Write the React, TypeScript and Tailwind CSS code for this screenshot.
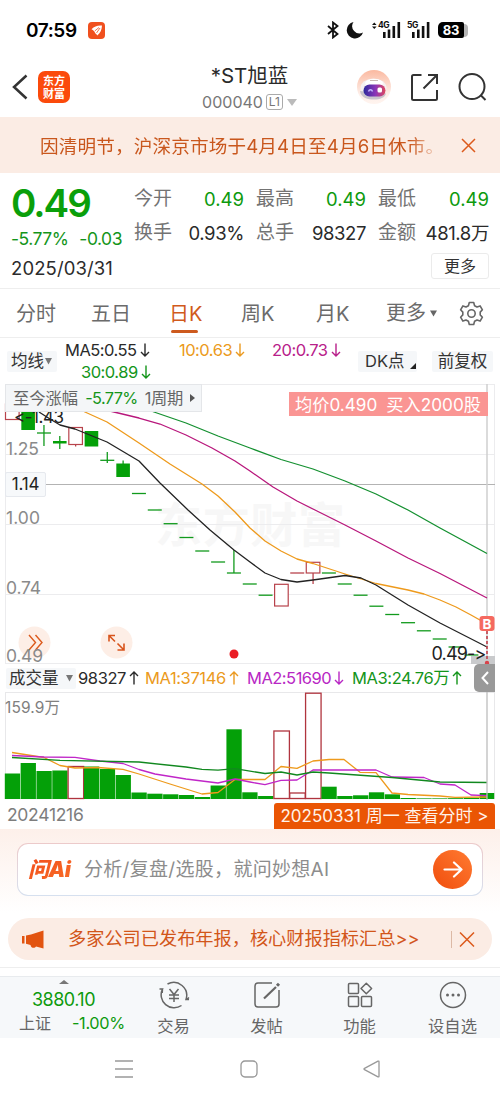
import React from 'react';

type Point = [number, number];

interface Candle {
  top: number;
  bottom: number;
  up?: boolean;
  wick?: Point;
}

// distance between two trading days on the x axis
const STEP = 15.83;
const centerX = (index: number) => 12.3 + index * STEP;

const toPoints = (points: Point[]) => points.map((p) => p.join(',')).join(' ');

const candles: Candle[] = [
  { top: 404, bottom: 419.5, up: true },
  { top: 408, bottom: 430 },
  { top: 433, bottom: 433, wick: [425, 446] },
  { top: 441, bottom: 443.5, wick: [436, 449] },
  { top: 427.5, bottom: 444.5, up: true, wick: [444.5, 446.5] },
  { top: 431, bottom: 446.5 },
  { top: 460.3, bottom: 460.3, wick: [452, 463] },
  { top: 463.5, bottom: 477, wick: [460.5, 464] },
  { top: 493.5, bottom: 493.5 },
  { top: 510, bottom: 510 },
  { top: 523.7, bottom: 523.7 },
  { top: 537.5, bottom: 537.5 },
  { top: 551, bottom: 551 },
  { top: 562, bottom: 562 },
  { top: 573, bottom: 573, wick: [550, 573] },
  { top: 584, bottom: 584 },
  { top: 595.2, bottom: 595.2 },
  { top: 584.3, bottom: 606, up: true },
  { top: 573, bottom: 573, up: true },
  { top: 562.3, bottom: 573, up: true, wick: [573, 584] },
  { top: 573, bottom: 573 },
  { top: 584, bottom: 584 },
  { top: 595.2, bottom: 595.2 },
  { top: 606.2, bottom: 606.2 },
  { top: 614.5, bottom: 614.5 },
  { top: 622.7, bottom: 622.7 },
  { top: 630.8, bottom: 630.8 },
  { top: 639, bottom: 639 },
  { top: 647, bottom: 647 },
  { top: 655, bottom: 655 },
];

const priceLines: { color: string; points: Point[] }[] = [
  {
    color: '#149030',
    points: [[140, 407], [154, 412], [186, 423], [218, 436], [250, 448], [281, 459.5], [313, 469], [345, 481], [376, 494], [408, 510], [440, 528], [464, 541], [487, 553.5]],
  },
  {
    color: '#b8177c',
    points: [[98, 408], [114, 412], [139, 418], [160, 424], [186, 435], [212, 448], [235, 461], [250, 471], [273, 487], [297, 501], [315, 510], [345, 525], [376, 541], [408, 558], [440, 573.5], [464, 586], [487, 598]],
  },
  {
    color: '#ee9a1c',
    points: [[75, 407], [85, 412], [107, 422], [139, 443], [170, 464], [202, 484], [218, 496], [235, 512], [250, 528], [265, 541], [281, 551], [297, 559], [313, 563.5], [345, 574], [376, 583.5], [408, 590], [424, 594], [440, 600], [456, 607], [471, 615], [487, 624]],
  },
  {
    color: '#222222',
    points: [[39, 412], [50, 419], [60, 425], [75, 429], [107, 442], [139, 461], [160, 483], [188, 510], [210, 530], [234, 550], [250, 562], [265, 573], [281, 579.5], [297, 582], [313, 580], [345, 575.5], [361, 578], [376, 585], [392, 595], [408, 605], [440, 623], [487, 647]],
  },
];

const volumes: { top: number; up?: boolean }[] = [
  { top: 773.5 }, { top: 763 }, { top: 771 }, { top: 770.5 }, { top: 766.5, up: true },
  { top: 766.5 }, { top: 769 }, { top: 775 }, { top: 792.5 }, { top: 793.7 },
  { top: 794.3 }, { top: 795 }, { top: 797 }, { top: 785.5 }, { top: 729.3 },
  { top: 792.3 }, { top: 796 }, { top: 731, up: true }, { top: 793, up: true }, { top: 693.2, up: true },
  { top: 786.7 }, { top: 796 }, { top: 795.3 }, { top: 792.3 }, { top: 794.3 },
  { top: 798 }, { top: 798.4 }, { top: 798.4 }, { top: 798.2 }, { top: 797.8 }, { top: 793 },
];

const volumeLines: { color: string; points: Point[] }[] = [
  {
    color: '#ee9a1c',
    points: [[12, 752.5], [44, 757.5], [60, 765.5], [75, 768], [98, 767.5], [123, 769.3], [139, 774], [170, 784], [202, 794], [218, 792.5], [235, 779.5], [265, 779.5], [281, 766.5], [297, 768.3], [313, 761], [329, 759.5], [344, 759.5], [360, 772.3], [376, 772.7], [392, 793], [408, 794.5], [440, 796], [455, 797.3], [487, 797]],
  },
  {
    color: '#c026c8',
    points: [[12, 755.5], [44, 757], [75, 757.3], [100, 761], [123, 763.5], [139, 769.5], [155, 774], [186, 779], [218, 783], [235, 779], [250, 782], [265, 784.7], [281, 780.3], [297, 780], [313, 770], [376, 770], [392, 777], [424, 777.5], [440, 784], [455, 785], [471, 795], [487, 795.7]],
  },
  {
    color: '#11881f',
    points: [[12, 757.5], [60, 760.3], [139, 762], [186, 767], [202, 769.3], [218, 770.2], [235, 768.7], [265, 773.5], [281, 772], [297, 775], [313, 772], [329, 773], [392, 777.5], [440, 782], [487, 782.5]],
  },
];

const StatusBar = () => (
  <div className="flex h-[60px] items-center justify-between pr-[32px] pl-[26px]">
    <div className="flex items-center gap-[11px]">
      <span className="text-[19px] leading-none font-semibold tracking-[-0.4px] text-black">07:59</span>
      <svg width="17" height="17" viewBox="0 0 17 17">
        <rect width="17" height="17" rx="4" fill="#f0501e" />
        <path d="M3.5 7.2C6.5 4.3 9.5 3.2 14 3.6c-.2 4.5-1.6 7.400-4.800 10-.500-1.300-1-1.900-2-2.400-.5-1.700-1.700-3.200-3.700-4Z" fill="#fff" />
        <path d="M6.800 8.900 11 5.500M8.500 11l3.500-5" stroke="#f0501e" strokeWidth=".8" />
      </svg>
    </div>
    <div className="flex items-center">
      <svg width="12" height="18" viewBox="0 0 12 18" fill="none" stroke="#111" strokeWidth="1.8">
        <path d="M1 5l9.500 8L6 16.500v-15L10.500 5 1 13" />
      </svg>
      <svg className="ml-[7px]" width="18" height="18" viewBox="0 0 18 18">
        <path d="M7.500 1A8.300 8.300 0 1 0 17 11.500 7.300 7.300 0 0 1 7.500 1Z" fill="#111" />
      </svg>
      <div className="relative ml-[8px] h-[18px] w-[29px]">
        <svg width="29" height="18" viewBox="0 0 29 18" fill="#111">
          <path d="M0 4 2.300 1.500 4.600 4ZM0 5.500h4.600L2.300 8Z" />
          <rect x="11" y="11" width="2.600" height="6" />
          <rect x="15.700" y="8.500" width="2.600" height="8.500" />
          <rect x="20.500" y="5" width="2.600" height="12" />
          <rect x="25.500" y="1" width="2.600" height="16" />
        </svg>
        <span className="absolute top-0 left-[6px] text-[8.500px] leading-[9px] font-bold tracking-[-0.5px] text-[#111]">4G</span>
      </div>
      <div className="relative ml-[6px] h-[18px] w-[24px]">
        <svg width="24" height="18" viewBox="0 0 24 18" fill="#111">
          <rect x="5" y="11" width="2.600" height="6" />
          <rect x="10" y="8.500" width="2.600" height="8.500" />
          <rect x="14.800" y="5" width="2.600" height="12" />
          <rect x="19.800" y="1" width="2.600" height="16" />
        </svg>
        <span className="absolute top-0 left-0 text-[8.500px] leading-[9px] font-bold tracking-[-0.5px] text-[#111]">5G</span>
      </div>
      <div className="ml-[7px] flex h-[16px] w-[26px] items-center justify-center rounded-l-[5px] rounded-r-[2px] bg-black text-[13px] leading-none font-bold tracking-[-0.3px] text-white">
        83
      </div>
      <div className="h-[13px] w-[4px] rounded-r-full bg-[#b5b5b5]" />
    </div>
  </div>
);

const Header = () => (
  <div className="flex h-[57px] items-start justify-between pr-[13px] pl-[12px]">
    <div className="flex w-[170px] items-center pt-[11px]">
      <svg width="16" height="26" viewBox="0 0 16 26" fill="none" stroke="#333" strokeWidth="2.500">
        <path d="M14.500 1.500 2 13l12.500 11.500" />
      </svg>
      <div className="ml-[10px] flex h-[32px] w-[32px] flex-col items-center justify-center rounded-[7px] bg-[#fb4a0b] font-['Noto_Sans_CJK_SC'] text-[11px] leading-[13px] font-bold text-white">
        <span>东方</span>
        <span>财富</span>
      </div>
    </div>
    <div className="flex flex-col items-center">
      <div className="mt-[4px] h-[24px] text-[20.500px] leading-[24px] whitespace-nowrap text-[#2a2a2a]">*ST旭蓝</div>
      <div className="mt-[6px] flex h-[16px] items-center text-[16px] leading-[16px] text-[#777]">
        <span>000040</span>
        <span className="ml-[3px] flex h-[16px] w-[17px] items-center justify-center rounded-[3px] border border-[#aaa] text-[12px]">L1</span>
        <svg className="ml-[4px]" width="10" height="7" viewBox="0 0 10 7">
          <path d="M0 0h10L5 7Z" fill="#bbb" />
        </svg>
      </div>
    </div>
    <div className="flex w-[170px] items-center justify-end pt-[9px]">
      <svg width="36" height="36" viewBox="0 0 36 36">
        <defs>
          <linearGradient id="halo" x1="0" y1="0" x2="0" y2="1">
            <stop offset="0" stopColor="#fbb9a0" />
            <stop offset=".7" stopColor="#fdeee8" />
            <stop offset="1" stopColor="#fff4ef" />
          </linearGradient>
          <linearGradient id="visor" x1="0" y1="0" x2="1" y2="0">
            <stop offset="0" stopColor="#2d2a9c" />
            <stop offset=".55" stopColor="#8b35b8" />
            <stop offset="1" stopColor="#e0485c" />
          </linearGradient>
        </defs>
        <circle cx="18" cy="18" r="17" fill="url(#halo)" />
        <ellipse cx="17.500" cy="19" rx="13" ry="9.500" fill="#f5f1f2" />
        <path d="M4 22c1 7 8 8.500 14 8.500s11-2 12-6" fill="#c9c4cc" />
        <ellipse cx="18" cy="14" rx="9" ry="4" fill="#fff" />
        <path d="M14 11.500h8" stroke="#c9b9b5" />
        <rect x="7.500" y="15.500" width="22" height="12" rx="6" fill="url(#visor)" />
        <path d="M12.500 22.500c.8-2.500 3.200-2.500 4 0" fill="none" stroke="#c5b8ff" strokeWidth="1.500" />
        <rect x="21.500" y="18.500" width="4.500" height="5" rx="1.500" fill="#fff" />
      </svg>
      <svg className="ml-[18px]" width="29" height="29" viewBox="0 0 29 29" fill="none" stroke="#333" strokeWidth="2">
        <path d="M11.500 2H3.500A1.500 1.500 0 0 0 2 3.500v22A1.500 1.500 0 0 0 3.500 27h22a1.500 1.500 0 0 0 1.500-1.500V17" />
        <path d="M18 2h9v9M27 2 13.500 15.500" />
      </svg>
      <svg className="ml-[18px]" width="30" height="30" viewBox="0 0 30 30" fill="none" stroke="#333" strokeWidth="2">
        <circle cx="15" cy="14.500" r="12.500" />
        <path d="m23.500 23 5 5" />
      </svg>
    </div>
  </div>
);

const Notice = () => (
  <div className="flex h-[56px] items-center bg-[#fbece4] pl-[40px] text-[#c9571d]">
    <div className="w-[402px] overflow-hidden pt-[3px] text-[18.600px] tracking-[0.15px] whitespace-nowrap [mask-image:linear-gradient(to_right,black_92%,transparent)]">
      因清明节，沪深京市场于4月4日至4月6日休市。
    </div>
    <svg className="ml-[19px]" width="15" height="15" viewBox="0 0 15 15" stroke="#dc5a1c" strokeWidth="1.500">
      <path d="m1 1 13 13M14 1 1 14" />
    </svg>
  </div>
);

interface QuoteCellProps {
  label: string;
  value: string;
  green?: boolean;
}

const QuoteCell: React.FC<QuoteCellProps> = ({ label, value, green }) => (
  <div className="flex items-center justify-between leading-[24px] whitespace-nowrap">
    <span className="pt-px text-[19px] text-[#737373]">{label}</span>
    <span className={`text-[18.500px] ${green ? 'tracking-normal text-[#0d9a0d]' : 'tracking-[-0.4px] text-[#2a2a2a]'}`}>{value}</span>
  </div>
);

const Quote = () => (
  <div className="flex h-[116px] border-b border-[#eee] pl-[11px]">
    <div className="w-[123px] whitespace-nowrap">
      <div className="mt-[12px] text-[38.500px] leading-[36px] font-semibold tracking-[-2px] text-[#0a9f0a]">0.49</div>
      <div className="mt-[8px] flex gap-[11px] text-[17.500px] leading-[20px] tracking-[-0.5px] text-[#14951a]">
        <span>-5.77%</span>
        <span>-0.03</span>
      </div>
      <div className="mt-[9px] text-[18.500px] leading-[20px] tracking-[0.1px] text-[#2c2c2c]">2025/03/31</div>
    </div>
    <div className="flex flex-col">
      <div className="mt-[13px] grid grid-cols-[110px_110px_111px] gap-x-[12px] gap-y-[9px]">
        <QuoteCell label="今开" value="0.49" green />
        <QuoteCell label="最高" value="0.49" green />
        <QuoteCell label="最低" value="0.49" green />
        <QuoteCell label="换手" value="0.93%" />
        <QuoteCell label="总手" value="98327" />
        <QuoteCell label="金额" value="481.8万" />
      </div>
      <button className="mt-[8px] flex h-[26px] w-[58px] items-center justify-center self-end rounded-[3px] border border-[#ebebeb] text-[16px] text-[#333]">
        更多
      </button>
    </div>
  </div>
);

const Tabs = () => (
  <div className="flex h-[49px] border-b border-[#eee] pl-[16px] text-[20px] leading-[51px] whitespace-nowrap text-[#6b6b6b]">
    <span className="w-[75px]">分时</span>
    <span className="w-[78px]">五日</span>
    <span className="relative w-[72px] text-[#d15a1c]">
      日K
      <span className="absolute bottom-[4px] left-[2px] h-[3px] w-[27px] rounded-full bg-[#cd5a1e]" />
    </span>
    <span className="w-[75px]">周K</span>
    <span className="w-[70px]">月K</span>
    <span className="flex items-center">
      更多
      <svg className="ml-[4px]" width="7" height="7" viewBox="0 0 8 7">
        <path d="M0 0h8L4 7Z" fill="#666" />
      </svg>
    </span>
    <svg className="mt-[12px] ml-[22px]" width="25" height="25" viewBox="0 0 25 25" fill="none" stroke="#666" strokeWidth="1.600">
      <path d="M10.300 1.500h4.400l.9 3.200 2.400 1.300 3.100-1.100 2.300 3.900-2.200 2.300v2.800l2.200 2.300-2.300 3.900-3.100-1.100-2.400 1.300-.9 3.200h-4.400l-.9-3.200L7 19l-3.100 1.100-2.300-3.900 2.200-2.300v-2.800L1.600 8.800l2.300-3.900L7 6l2.400-1.300Z" strokeLinejoin="round" />
      <circle cx="12.500" cy="12.500" r="3.700" />
    </svg>
  </div>
);

const MaBar = () => (
  <div className="flex h-[46px] items-center pl-[7px] whitespace-nowrap">
    <div className="flex h-[21px] w-[50px] items-center rounded-[2px] bg-[#f5f7f9] pl-[4px] text-[16.500px] text-[#333]">
      均线
      <svg className="ml-[1px]" width="7" height="7" viewBox="0 0 7 7">
        <path d="M0 0h7L3.500 6.500Z" fill="#777" />
      </svg>
    </div>
    <div className="ml-[8px] flex h-[44px] w-[291px] flex-col text-[16.500px] leading-[22px] tracking-[-0.5px]">
      <div className="flex">
        <span className="w-[114px] text-[#2a2a2a]">MA5:0.55<Arrow down /></span>
        <span className="w-[93px] text-[#eb9a20]">10:0.63<Arrow down /></span>
        <span className="text-[#b8208a]">20:0.73<Arrow down /></span>
      </div>
      <div className="pl-[16px] text-[#14951a]">30:0.89<Arrow down /></div>
    </div>
    <div className="ml-[2px] flex h-[21px] w-[59px] items-center rounded-[2px] bg-[#f5f7f9] pl-[7px] text-[16.500px] text-[#333]">
      DK点
      <svg className="mt-[9px] ml-[5px]" width="6" height="6" viewBox="0 0 6 6">
        <path d="M6 0v6H0Z" fill="#222" />
      </svg>
    </div>
    <div className="ml-[15px] flex h-[21px] w-[61px] items-center justify-center rounded-[2px] bg-[#f5f7f9] text-[16.500px] text-[#333]">
      前复权
    </div>
  </div>
);

const Arrow = ({ down }: { down?: boolean }) => (
  <svg className="ml-[3px] inline-block align-[-1px]" width="10" height="14" viewBox="0 0 10 14" fill="none" stroke="currentColor" strokeWidth="1.400">
    <path d={down ? 'M5 .5v12.500M1 9l4 4 4-4' : 'M5 13.500V1M1 5l4-4 4 4'} />
  </svg>
);

const PriceChart = () => (
  <div className="relative h-[280px]">
    <svg className="block" width="500" height="280" viewBox="0 384 500 280" fontFamily="Inter, 'Noto Sans CJK SC', sans-serif">
      <text x="155" y="542" fontSize="47" fontWeight="700" fill="#f7f7f7" textLength="190">东方财富</text>
      <path d="M5 384.500h490M5 454.500h490M5 524.500h490M5 594.500h490M5 663.500h490M5.500 384v280M494.500 384v280" stroke="#ececee" fill="none" />
      <path d="M45 484.500h450" stroke="#b3b3b3" />
      <path d="M487 384v280" stroke="#cfcfcf" strokeWidth="1.500" />
      <circle cx="34.500" cy="642.500" r="16" fill="#fdeee6" />
      <circle cx="116.500" cy="642.500" r="16" fill="#fdeee6" />
      <path d="m29 635 6.500 7.500-6.500 7.500M35.500 635l6.500 7.500-6.500 7.500" fill="none" stroke="#dc5a1c" strokeWidth="1.400" />
      <path d="m109 635.500 6 6M109 641.500v-6h6M124 650l-6.500-6.500M124 643.500v6.500h-6.500" fill="none" stroke="#d8541c" strokeWidth="1.600" />
      <g fontSize="17.500" fill="#8a8a8a">
        <text x="6" y="454.500" textLength="33">1.25</text>
        <text x="6" y="524" textLength="34">1.00</text>
        <text x="6" y="594" textLength="35">0.74</text>
        <text x="6" y="662" textLength="37">0.49</text>
      </g>
      {candles.map((c, i) => {
        const x = centerX(i);
        const color = c.up ? '#b8434c' : '#119a1c';
        return (
          <g key={i}>
            {c.wick && <path d={`M${x} ${c.wick[0]}V${c.wick[1]}`} stroke={color} strokeWidth="1.300" />}
            {c.top === c.bottom ? (
              <path d={`M${x - 7} ${c.top}h14`} stroke={color} strokeWidth="1.300" />
            ) : (
              <rect
                x={x - 6.8}
                y={c.top}
                width="13.600"
                height={c.bottom - c.top}
                fill={c.up ? '#fff' : '#04a008'}
                stroke={c.up ? color : 'none'}
                strokeWidth="1.200"
              />
            )}
          </g>
        );
      })}
      {priceLines.map((line) => (
        <polyline key={line.color} points={toPoints(line.points)} fill="none" stroke={line.color} strokeWidth="1.300" strokeLinejoin="round" />
      ))}
      <text x="14" y="422.500" fontSize="17" fill="#222" textLength="50">&lt;-1.43</text>
      <circle cx="234" cy="654" r="4.500" fill="#ea1c24" />
      <rect x="471" y="656" width="24" height="8" fill="#c9cacc" />
      <text x="431.500" y="660" fontSize="18" fill="#222" textLength="55">0.49-&gt;</text>
      <path d="M487 631v33" stroke="#c0404a" strokeWidth="1.600" strokeDasharray="3 2" />
      <circle cx="487" cy="663" r="2.200" fill="#d8434a" />
      <rect x="479.500" y="616" width="15" height="15" rx="3" fill="#f5695f" />
      <text x="487" y="628.500" fontSize="13.500" fontWeight="700" fill="#fff" textAnchor="middle">B</text>
    </svg>
    <div className="absolute top-0 left-[5px] flex h-[28px] w-[197px] items-center border border-[#e4e6e9] bg-[#f4f6f8] pl-[7px] text-[16.300px] whitespace-nowrap text-[#666]">
      至今涨幅
      <span className="ml-[7px] tracking-[-0.6px] text-[#14951a]">-5.77%</span>
      <span className="ml-[7px] tracking-[-0.3px]">1周期</span>
      <svg className="ml-[7px]" width="5" height="8" viewBox="0 0 5 8">
        <path d="M0 0v8l5-4Z" fill="#555" />
      </svg>
    </div>
    <div className="absolute top-[8px] left-[289px] flex h-[24px] w-[199px] items-center bg-[#fa9593] pt-px pl-[6px] text-[17.200px] whitespace-nowrap text-white">
      均价0.490
      <span className="ml-[9px]">买入2000股</span>
    </div>
    <div className="absolute top-[88px] left-[5px] flex h-[25px] w-[41px] items-center justify-center rounded-[2px] border border-[#e6e9ee] bg-[#f7f9fb] text-[17px] tracking-[-0.2px] text-[#222]">
      1.14
    </div>
  </div>
);

const VolumeBar = () => (
  <div className="flex h-[28px] items-center pl-[6px] text-[16.500px] tracking-[-0.4px] whitespace-nowrap">
    <div className="flex h-[21px] w-[70px] items-center rounded-[2px] bg-[#f5f7f9] pl-[3px] tracking-normal text-[#333]">
      成交量
      <svg className="ml-[7px]" width="7" height="7" viewBox="0 0 7 7">
        <path d="M0 0h7L3.500 6.500Z" fill="#777" />
      </svg>
    </div>
    <span className="ml-[2px] w-[67px] text-[#2a2a2a]">98327<Arrow /></span>
    <span className="w-[102px] tracking-[-0.4px] text-[#eb9a20]">MA1:37146<Arrow /></span>
    <span className="w-[105px] tracking-[-0.5px] text-[#b827c4]">MA2:51690<Arrow down /></span>
    <span className="w-[122px] text-[#14951a]">MA3:24.76万<Arrow /></span>
    <div className="flex h-[28px] w-[21px] items-center justify-center rounded-l-[5px] bg-[#999]">
      <svg width="8" height="14" viewBox="0 0 8 14" fill="none" stroke="#fff" strokeWidth="2">
        <path d="M7 1 1.500 7 7 13" />
      </svg>
    </div>
  </div>
);

const VolumeChart = () => (
  <svg className="block" width="500" height="108" viewBox="0 692 500 108" fontFamily="Inter, 'Noto Sans CJK SC', sans-serif">
    <path d="M5 692.500h490M5.500 692v107M494.500 692v107M5 798.700h490" stroke="#e8e8ea" fill="none" />
    <text x="5" y="713" fontSize="15.500" fill="#808080" textLength="55">159.9万</text>
    {volumes.map((v, i) => {
      const x = centerX(i) - 7.5;
      return v.up ? (
        <rect key={i} x={x} y={v.top} width="15.500" height={798.5 - v.top} fill="#fff" stroke="#b0343e" strokeWidth="1.300" />
      ) : (
        <rect key={i} x={x} y={v.top} width={i === 30 ? 14.5 : 15.3} height={799 - v.top} fill="#04a008" />
      );
    })}
    {volumeLines.map((line) => (
      <polyline key={line.color} points={toPoints(line.points)} fill="none" stroke={line.color} strokeWidth="1.300" strokeLinejoin="round" />
    ))}
    <path d="M487 692v108" stroke="#bdbdbd" strokeWidth="1.300" />
  </svg>
);

const DateRow = () => (
  <div className="flex h-[29px] items-end justify-between pr-[5px] pl-[7px] whitespace-nowrap">
    <span className="pb-[3px] text-[17.500px] leading-[22px] tracking-[-0.3px] text-[#7d7d7d]">20241216</span>
    <div className="flex h-[26px] w-[221px] items-center justify-center rounded-t-[3px] bg-[#ea5504] pt-[2px] text-[17px] text-[#fff3ea]">
      20250331 周一 查看分时 &gt;
    </div>
  </div>
);

const AskBar = () => (
  <div className="h-[84px] bg-gradient-to-b from-[#fdf0ea] to-white px-[17px] pt-[14px]">
    <div className="h-[53px] rounded-[11px] bg-gradient-to-b from-[#eccaca] to-[#d6e0ef] p-px">
      <div className="flex h-full items-center rounded-[10px] bg-white pr-[10px] pl-[10px]">
        <span className="w-[56px] bg-gradient-to-br from-[#f04a1c] to-[#fb7428] bg-clip-text text-[21px] font-black tracking-[-0.5px] text-transparent italic">
          问Ai
        </span>
        <span className="flex-1 pt-[2px] text-[19px] tracking-[0.3px] whitespace-nowrap text-[#8d8d8d]">分析/复盘/选股，就问妙想AI</span>
        <div className="flex h-[39px] w-[39px] items-center justify-center rounded-full bg-gradient-to-tr from-[#f04c08] to-[#ff7a30]">
          <svg width="20" height="17" viewBox="0 0 20 17" fill="none" stroke="#fff" strokeWidth="2.200" strokeLinecap="round" strokeLinejoin="round">
            <path d="M1.500 8.500h17M11 1.500l7.500 7-7.500 7" />
          </svg>
        </div>
      </div>
    </div>
  </div>
);

const NewsPill = () => (
  <div className="mx-[8px] mt-[5px] flex h-[42px] items-center rounded-full bg-[#fbece4] pl-[14px] text-[#d2561a]">
    <svg width="22" height="19" viewBox="0 0 22 19" fill="#e25410">
      <path d="M0 6h2.500v7.500H0ZM4 5.500 9 4.500 21.500.5v18L14 16.500c-1 2-5 2-5.500-1.500L4 13.800Z" />
    </svg>
    <span className="ml-[24px] w-[374px] text-[18.200px] whitespace-nowrap">多家公司已发布年报，核心财报指标汇总&gt;&gt;</span>
    <span className="ml-[9px] h-[17px] w-px bg-[#dcb9a5]" />
    <svg className="ml-[7px]" width="16" height="15" viewBox="0 0 16 15" stroke="#dc5a1c" strokeWidth="1.500">
      <path d="m1 .5 14 14M15 .5l-14 14" />
    </svg>
  </div>
);

interface MenuItemProps {
  label: string;
  children: React.ReactNode;
}

const MenuItem: React.FC<MenuItemProps> = ({ label, children }) => (
  <div className="flex w-[93px] flex-col items-center">
    <svg className="mt-[4px]" width="32" height="28" viewBox="0 0 32 28" fill="none" stroke="#666" strokeWidth="1.500">
      {children}
    </svg>
    <span className="mt-[6px] text-[16.300px] leading-[22px] whitespace-nowrap text-[#666]">{label}</span>
  </div>
);

const BottomBar = () => (
  <div className="mt-[7px] border-t border-[#eeeeee] pt-[8px]">
    <div className="flex h-[62px] border-t border-[#e8ebee] bg-[#f6f8fa]">
      <div className="flex w-[127px] flex-col items-center whitespace-nowrap">
        <svg className="mt-[3px]" width="10" height="4" viewBox="0 0 10 4">
          <path d="M0 4 5 0l5 4Z" fill="#777" />
        </svg>
        <div className="mt-[6px] text-[18px] leading-[20px] tracking-[-0.5px] text-[#0d9a0d]">3880.10</div>
        <div className="mt-[2px] flex w-full items-center justify-between pr-[2px] pl-[19px] leading-[22px]">
          <span className="text-[16px] text-[#666]">上证</span>
          <span className="text-[16.300px] tracking-[-0.3px] text-[#0d9a0d]">-1.00%</span>
        </div>
      </div>
      <MenuItem label="交易">
        <path d="M9.500 3A13 13 0 0 1 28 18.500h3M28.500 18.500l2.500-2M23.500 24.500A13 13 0 0 1 4.500 8H1.500M4.500 8l-.3 4" />
        <path d="m11.500 8 4.500 5.500L20.500 8M16 13.500V21M11 14h10M11 17.500h10" />
      </MenuItem>
      <MenuItem label="发帖">
        <path d="M21 2H7a3 3 0 0 0-3 3v18a3 3 0 0 0 3 3h18a3 3 0 0 0 3-3V9" />
        <path d="M13 17.500 25 6" strokeWidth="2.200" />
        <path d="m26 4.800 2-2" strokeWidth="3" />
      </MenuItem>
      <MenuItem label="功能">
        <rect x="4.500" y="2.500" width="10" height="10" rx="1" />
        <rect x="4.500" y="15.500" width="10" height="10" rx="1" />
        <rect x="17.500" y="15.500" width="10" height="10" rx="1" />
        <path d="m22.300 2.200 5.300 5.300-5.300 5.300-5.300-5.300Z" strokeLinejoin="round" />
      </MenuItem>
      <MenuItem label="设自选">
        <circle cx="16" cy="14" r="12.500" />
        <g fill="#666" stroke="none">
          <circle cx="10.500" cy="14" r="1.500" />
          <circle cx="16" cy="14" r="1.500" />
          <circle cx="21.500" cy="14" r="1.500" />
        </g>
      </MenuItem>
    </div>
  </div>
);

const SystemNav = () => (
  <div className="flex h-[62px] items-center pl-[115px]">
    <svg width="18" height="18" viewBox="0 0 18 18" stroke="#999" strokeWidth="1.300">
      <path d="M0 1h18M0 9h18M0 17h18" />
    </svg>
    <svg className="ml-[107px]" width="18" height="18" viewBox="0 0 18 18" fill="none" stroke="#999" strokeWidth="1.300">
      <rect x="1" y="1" width="16" height="16" rx="4" />
    </svg>
    <svg className="ml-[105px]" width="18" height="18" viewBox="0 0 18 18" fill="none" stroke="#999" strokeWidth="1.300" strokeLinejoin="round">
      <path d="M1.500 8.300 15 1.200q1-.5 1 .6v14.400q0 1.100-1 .6L1.500 9.700q-1-.7 0-1.400Z" />
    </svg>
  </div>
);

export default function App() {
  return (
    <div className="h-[1100px] w-[500px] overflow-hidden bg-white font-[Inter,'Noto_Sans_CJK_SC',sans-serif] [font-feature-settings:'calt'_0]">
      <StatusBar />
      <Header />
      <Notice />
      <Quote />
      <Tabs />
      <MaBar />
      <PriceChart />
      <VolumeBar />
      <VolumeChart />
      <DateRow />
      <AskBar />
      <NewsPill />
      <BottomBar />
      <SystemNav />
    </div>
  );
}
